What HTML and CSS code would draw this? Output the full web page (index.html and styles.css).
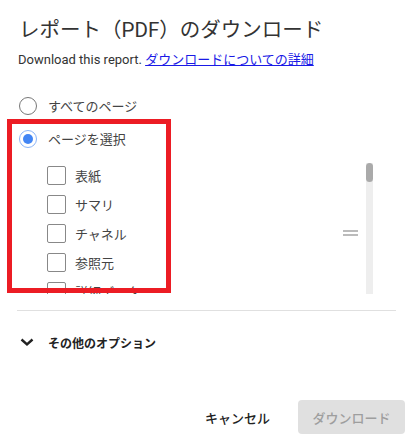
FILE: index.html
```html
<!DOCTYPE html>
<html lang="ja">
<head>
<meta charset="utf-8">
<link rel="stylesheet" href="styles.css">
</head>
<body>
<div class="dialog">
  <h1 class="title">レポート（PDF）のダウンロード</h1>
  <p class="desc">Download this report. <a class="link" href="#">ダウンロードについての詳細</a></p>

  <div class="radio-row first">
    <span class="radio"></span>
    <span class="radio-label">すべてのページ</span>
  </div>
  <div class="radio-row">
    <span class="radio checked"><span class="dot"></span></span>
    <span class="radio-label">ページを選択</span>
  </div>

  <div class="pages">
    <div class="items">
      <div class="item"><span class="box"></span><span class="item-label">表紙</span></div>
      <div class="item"><span class="box"></span><span class="item-label">サマリ</span></div>
      <div class="item"><span class="box"></span><span class="item-label">チャネル</span></div>
      <div class="item"><span class="box"></span><span class="item-label">参照元</span></div>
      <div class="item"><span class="box"></span><span class="item-label">詳細データ</span></div>
    </div>
    <div class="handle"><span></span><span></span></div>
    <div class="scrollbar"><div class="thumb"></div></div>
  </div>

  <div class="divider"></div>

  <div class="options">
    <svg class="chevron" width="14" height="9" viewBox="0 0 14 9"><path d="M1.5 1.5 L7 6.5 L12.5 1.5" fill="none" stroke="#222" stroke-width="2.4"/></svg>
    <span class="options-label">その他のオプション</span>
  </div>

  <div class="actions">
    <button class="btn cancel">キャンセル</button>
    <button class="btn download" disabled>ダウンロード</button>
  </div>

  <div class="highlight"></div>
</div>
</body>
</html>
```

FILE: styles.css
```css
* { box-sizing: border-box; }
html, body {
  margin: 0;
  padding: 0;
  background: #fff;
}
body {
  font-family: Roboto, "Noto Sans CJK JP", sans-serif;
  color: #333;
}
.dialog {
  position: relative;
  width: 412px;
  height: 442px;
  padding: 16px 16px 0 18px;
}
.title {
  margin: 0;
  font-size: 20.5px;
  line-height: 28px;
  font-weight: 400;
  color: #333;
  padding-left: 1px;
}
.desc {
  margin: 6px 0 0 0;
  font-size: 13px;
  line-height: 20px;
  color: #333;
}
.link {
  color: #1a1ae6;
  text-decoration: underline;
}
.radio-row {
  display: flex;
  align-items: center;
  height: 33px;
  padding-left: 1px;
}
.radio-row.first { margin-top: 19px; }
.radio {
  width: 18px;
  height: 18px;
  border: 1.5px solid #777;
  border-radius: 50%;
  display: flex;
  align-items: center;
  justify-content: center;
  flex: none;
}
.radio.checked { border-color: #8ab4f8; }
.dot {
  width: 10px;
  height: 10px;
  border-radius: 50%;
  background: #4285f4;
}
.radio-label {
  margin-left: 11px;
  font-size: 13px;
  color: #444;
}
.pages {
  display: flex;
  margin-top: 6px;
  margin-left: 29px;
  width: 326px;
  height: 133px;
}
.items {
  flex: 1;
  overflow: hidden;
}
.item {
  display: flex;
  align-items: center;
  height: 29px;
}
.box {
  width: 19px;
  height: 19px;
  border: 1.5px solid #888;
  border-radius: 2px;
  flex: none;
}
.item-label {
  margin-left: 9px;
  font-size: 13px;
  color: #444;
}
.handle {
  display: flex;
  flex-direction: column;
  gap: 2px;
  margin-top: 69px;
  margin-right: 8px;
}
.handle span {
  display: block;
  width: 15px;
  height: 2px;
  background: #bbb;
}
.scrollbar {
  width: 7px;
  margin-top: 2px;
  height: 131px;
  background: #eee;
}
.thumb {
  height: 19px;
  background: #aaa;
  border-radius: 4px;
}
.divider {
  margin-top: 16px;
  margin-left: -1px;
  width: 379px;
  height: 1px;
  background: #e0e0e0;
}
.options {
  display: flex;
  align-items: center;
  height: 30px;
  margin-top: 16px;
  padding-left: 2px;
}
.chevron { flex: none; }
.options-label {
  margin-left: 14px;
  font-size: 12px;
  font-weight: 700;
  color: #222;
}
.actions {
  display: flex;
  justify-content: flex-end;
  align-items: center;
  margin-top: 43px;
  margin-right: -9px;
}
.btn {
  font-family: Roboto, "Noto Sans CJK JP", sans-serif;
  font-size: 13px;
  border: none;
  height: 34px;
  border-radius: 4px;
  background: transparent;
}
.cancel {
  padding: 0 14px;
  margin-right: 14px;
  color: #222;
  font-weight: 500;
}
.download {
  width: 107px;
  padding: 0;
  background: #e0e0e0;
  color: #9e9e9e;
  font-weight: 500;
}
.highlight {
  position: absolute;
  left: 7px;
  top: 119px;
  width: 164px;
  height: 174px;
  border: 5px solid #ec1c24;
  pointer-events: none;
}
```
